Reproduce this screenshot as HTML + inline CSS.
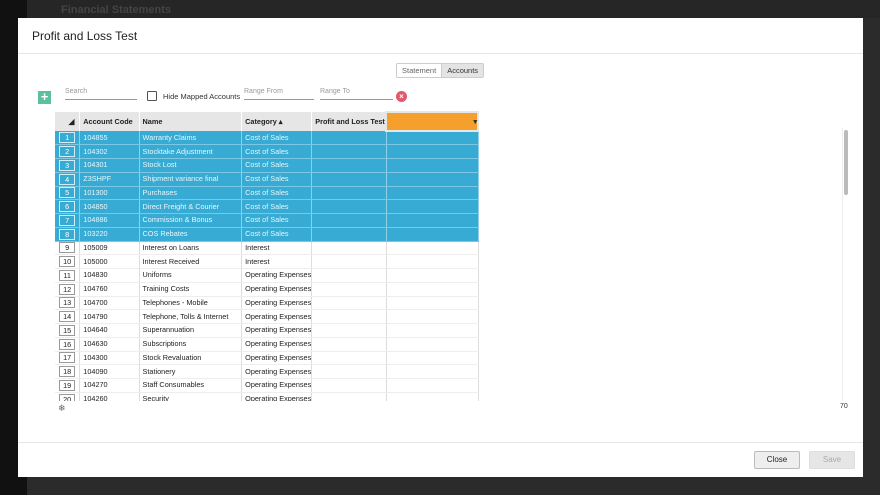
<!DOCTYPE html>
<html><head><style>
*{box-sizing:border-box;margin:0;padding:0}
body{width:880px;height:495px;overflow:hidden;background:#2b2b2b;font-family:"Liberation Sans",sans-serif;position:relative}
.side{position:absolute;left:0;top:0;width:27px;height:495px;background:#111}
.top{position:absolute;left:27px;top:0;right:0;height:18px;background:#262626;color:#444;font-size:11px;padding:4px 0 0 34px;font-weight:bold}
.modal{position:absolute;left:18px;top:18px;width:845px;height:459px;background:#fff}
.title{position:absolute;left:14px;top:11px;font-size:12px;color:#222}
.hr1{position:absolute;left:0;right:0;top:35px;border-top:1px solid #e6e6e6}
.hr2{position:absolute;left:0;right:0;top:424px;border-top:1px solid #e6e6e6}
.tabs{position:absolute;left:378px;top:45px;height:15px;border:1px solid #ccc;border-radius:2px;font-size:7.5px;display:flex}
.tabs div{padding:2px 5px;color:#666}
.tabs div+div{background:#e4e4e4;color:#333;border-left:1px solid #ccc}
.plus{position:absolute;left:20px;top:73px;width:13px;height:13px;background:#5cc0a0;color:#fff;font-size:13px;line-height:12px;text-align:center;font-weight:bold}
.inp{position:absolute;top:70px;height:12px;border-bottom:1px solid #999;font-size:7px;color:#999}
.cb{position:absolute;left:129px;top:73px;width:10px;height:10px;border:1px solid #555;border-radius:1px}
.cbl{position:absolute;left:145px;top:74px;font-size:7.5px;color:#333}
.x{position:absolute;left:378px;top:73px;width:11px;height:11px;border-radius:50%;background:#e05a6a;color:#fff;font-size:8px;line-height:11px;text-align:center;font-weight:bold}
.wrap{position:absolute;left:37px;top:93px;width:424px;height:290px;overflow:hidden}
table{border-collapse:collapse;font-size:7.3px;table-layout:fixed}
th{background:#e6e6e6;height:19px;text-align:left;padding-left:3px;font-weight:bold;color:#222;border-right:1px solid #fff;vertical-align:middle}
td{height:13.75px;line-height:12px;padding-left:3px;border-right:1px solid #ddd;border-bottom:1px solid #eee;color:#222;white-space:nowrap;overflow:hidden;vertical-align:middle}
tr.s td{background:#37abd3;color:#e8f6fb;border-right:1px solid #8fd0e8;border-bottom:1px solid #7cc7e3}
td.n{text-align:center;padding:0}
td.n span{display:inline-block;width:16px;height:11px;border:1px solid #999;line-height:9px;background:#fff;color:#222;vertical-align:middle}
tr.s td.n span{background:#37abd3;border-color:#d0eef8;color:#fff}
.or{background:#f5a02c;border:2px solid #e6e6e6}
.btn{position:absolute;top:433px;height:18px;font-size:8px;text-align:center;line-height:16px;border:1px solid #bbb;border-radius:2px}
.sb{position:absolute;left:826px;top:112px;width:4px;height:65px;background:#bbb;border-radius:2px}
.sbt{position:absolute;left:824px;top:110px;width:8px;height:273px;border-left:1px solid #eee}
</style></head><body>
<div class="side"></div>
<div class="top">Financial Statements</div>
<div class="modal">
<div class="title">Profit and Loss Test</div>
<div class="hr1"></div>
<div class="tabs"><div>Statement</div><div>Accounts</div></div>
<div class="plus">+</div>
<div class="inp" style="left:47px;width:72px">Search</div>
<div class="cb"></div><div class="cbl">Hide Mapped Accounts</div>
<div class="inp" style="left:226px;width:70px">Range From</div>
<div class="inp" style="left:302px;width:73px">Range To</div>
<div class="x">×</div>
<div class="wrap"><table>
<colgroup><col style="width:25px"><col style="width:60px"><col style="width:103px"><col style="width:66px"><col style="width:76px"><col style="width:94px"></colgroup>
<tr><th style="text-align:right;padding-right:5px">◢</th><th>Account Code</th><th>Name</th><th>Category ▴</th><th>Profit and Loss Test</th><th class="or" style="text-align:right;color:#333">▾</th></tr>
<tr class="s"><td class="n"><span>1</span></td><td>104855</td><td>Warranty Claims</td><td>Cost of Sales</td><td></td><td></td></tr>
<tr class="s"><td class="n"><span>2</span></td><td>104302</td><td>Stocktake Adjustment</td><td>Cost of Sales</td><td></td><td></td></tr>
<tr class="s"><td class="n"><span>3</span></td><td>104301</td><td>Stock Lost</td><td>Cost of Sales</td><td></td><td></td></tr>
<tr class="s"><td class="n"><span>4</span></td><td>Z3SHPF</td><td>Shipment variance final</td><td>Cost of Sales</td><td></td><td></td></tr>
<tr class="s"><td class="n"><span>5</span></td><td>101300</td><td>Purchases</td><td>Cost of Sales</td><td></td><td></td></tr>
<tr class="s"><td class="n"><span>6</span></td><td>104850</td><td>Direct Freight &amp; Courier</td><td>Cost of Sales</td><td></td><td></td></tr>
<tr class="s"><td class="n"><span>7</span></td><td>104886</td><td>Commission &amp; Bonus</td><td>Cost of Sales</td><td></td><td></td></tr>
<tr class="s"><td class="n"><span>8</span></td><td>103220</td><td>COS Rebates</td><td>Cost of Sales</td><td></td><td></td></tr>
<tr><td class="n"><span>9</span></td><td>105009</td><td>Interest on Loans</td><td>Interest</td><td></td><td></td></tr>
<tr><td class="n"><span>10</span></td><td>105000</td><td>Interest Received</td><td>Interest</td><td></td><td></td></tr>
<tr><td class="n"><span>11</span></td><td>104830</td><td>Uniforms</td><td>Operating Expenses</td><td></td><td></td></tr>
<tr><td class="n"><span>12</span></td><td>104760</td><td>Training Costs</td><td>Operating Expenses</td><td></td><td></td></tr>
<tr><td class="n"><span>13</span></td><td>104700</td><td>Telephones - Mobile</td><td>Operating Expenses</td><td></td><td></td></tr>
<tr><td class="n"><span>14</span></td><td>104790</td><td>Telephone, Tolls &amp; Internet</td><td>Operating Expenses</td><td></td><td></td></tr>
<tr><td class="n"><span>15</span></td><td>104640</td><td>Superannuation</td><td>Operating Expenses</td><td></td><td></td></tr>
<tr><td class="n"><span>16</span></td><td>104630</td><td>Subscriptions</td><td>Operating Expenses</td><td></td><td></td></tr>
<tr><td class="n"><span>17</span></td><td>104300</td><td>Stock Revaluation</td><td>Operating Expenses</td><td></td><td></td></tr>
<tr><td class="n"><span>18</span></td><td>104090</td><td>Stationery</td><td>Operating Expenses</td><td></td><td></td></tr>
<tr><td class="n"><span>19</span></td><td>104270</td><td>Staff Consumables</td><td>Operating Expenses</td><td></td><td></td></tr>
<tr><td class="n"><span>20</span></td><td>104260</td><td>Security</td><td>Operating Expenses</td><td></td><td></td></tr>
</table></div>
<div style="position:absolute;left:40px;top:385px;font-size:9px;color:#666">❄</div>
<div style="position:absolute;left:822px;top:385px;font-size:7px;color:#333">70</div>
<div class="sbt"></div><div class="sb"></div>
<div class="hr2"></div>
<div class="btn" style="left:736px;width:46px;background:#eee;color:#222">Close</div>
<div class="btn" style="left:791px;width:46px;background:#e6e6e6;color:#aaa;border-color:#ddd">Save</div>
</div>
</body></html>
